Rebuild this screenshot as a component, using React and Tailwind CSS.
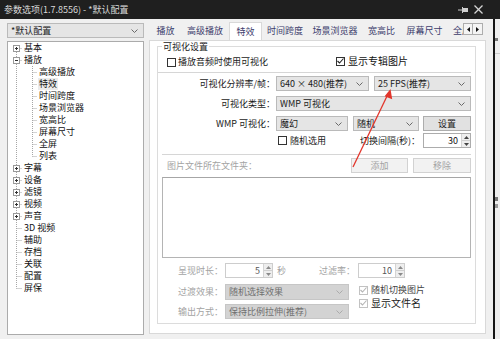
import React from "react";

function Chevron({ color = "#666666" }) {
  return (
    <svg width="7" height="4" viewBox="0 0 7 4" className="shrink-0">
      <polyline points="0.5,0.5 3.5,3.5 6.5,0.5" fill="none" stroke={color} strokeWidth="1" />
    </svg>
  );
}

function Select({ w, text, disabled, h = "h-[15px]" }) {
  return (
    <div
      className={`${w} ${h} shrink-0 flex items-center justify-between pl-[3px] pr-[5px] border ${
        disabled ? "bg-[#d3d3d3] border-[#c6c6c6] text-[#707070]" : "bg-[#e5e5e5] border-[#bababa] text-[#1a1a1a]"
      }`}
    >
      <span className="whitespace-nowrap">{text}</span>
      <Chevron color={disabled ? "#ababab" : "#6a6a6a"} />
    </div>
  );
}

function Spin({ w, value, disabled }) {
  const arrow = disabled ? "#8a8a8a" : "#444444";
  return (
    <div
      className={`${w} h-[15px] shrink-0 flex border bg-white ${
        disabled ? "border-[#cdcdcd] text-[#555555]" : "border-[#acacac] text-[#111111]"
      }`}
    >
      <div className="flex-1 flex items-center justify-end pr-[3px]">{value}</div>
      <div className="w-[9px] flex flex-col border-l border-[#d4d4d4] bg-[#eeeeee]">
        <div className="flex-1 flex items-center justify-center">
          <svg width="5" height="3" viewBox="0 0 5 3">
            <polygon points="2.5,0 5,3 0,3" fill={arrow} />
          </svg>
        </div>
        <div className="h-px bg-[#cfcfcf]" />
        <div className="flex-1 flex items-center justify-center">
          <svg width="5" height="3" viewBox="0 0 5 3">
            <polygon points="0,0 5,0 2.5,3" fill={arrow} />
          </svg>
        </div>
      </div>
    </div>
  );
}

function Check({ checked, disabled }) {
  return (
    <span
      className={`w-[9px] h-[9px] shrink-0 border bg-white flex items-center justify-center ${
        disabled ? "border-[#c2c2c2]" : "border-[#333333]"
      }`}
    >
      {checked && (
        <svg width="7" height="6" viewBox="0 0 7 6">
          <polyline
            points="0.5,3 2.5,5 6.5,0.5"
            fill="none"
            stroke={disabled ? "#b4b4b4" : "#222222"}
            strokeWidth="1.1"
          />
        </svg>
      )}
    </span>
  );
}

const tree = [
  { t: "基本", k: "plus", first: true },
  { t: "播放", k: "minus" },
  { t: "高级播放", c: 1 },
  { t: "特效", c: 1, sel: true },
  { t: "时间跨度", c: 1 },
  { t: "场景浏览器", c: 1 },
  { t: "宽高比", c: 1 },
  { t: "屏幕尺寸", c: 1 },
  { t: "全屏", c: 1 },
  { t: "列表", c: 1, last: true },
  { t: "字幕", k: "plus" },
  { t: "设备", k: "plus" },
  { t: "滤镜", k: "plus" },
  { t: "视频", k: "plus" },
  { t: "声音", k: "plus" },
  { t: "3D 视频" },
  { t: "辅助" },
  { t: "存档" },
  { t: "关联" },
  { t: "配置" },
  { t: "屏保", lastTop: true },
];

function TreeRow({ it }) {
  const w = it.c ? 30 : 15;
  const dot = "#a6a6a6";
  return (
    <div className="h-[12px] flex items-center leading-[12px]">
      <svg width={w} height="12" viewBox={`0 0 ${w} 12`} className="shrink-0">
        <line
          x1="8.5"
          y1={it.first ? 6 : 0}
          x2="8.5"
          y2={it.lastTop ? 6.5 : 12}
          stroke={dot}
          strokeDasharray="1 1"
        />
        {!it.c && <line x1="8.5" y1="6.5" x2="14" y2="6.5" stroke={dot} strokeDasharray="1 1" />}
        {it.c && (
          <>
            <line x1="24.5" y1="0" x2="24.5" y2={it.last ? 6.5 : 12} stroke={dot} strokeDasharray="1 1" />
            <line x1="24.5" y1="6.5" x2="29" y2="6.5" stroke={dot} strokeDasharray="1 1" />
          </>
        )}
        {it.k && (
          <>
            <rect x="5.5" y="3.5" width="6" height="6" fill="white" stroke="#9a9a9a" />
            <line x1="7" y1="6.5" x2="10" y2="6.5" stroke="#333333" />
            {it.k === "plus" && <line x1="8.5" y1="5" x2="8.5" y2="8" stroke="#333333" />}
          </>
        )}
      </svg>
      <span className={`px-[1px] text-[#111111] whitespace-nowrap ${it.sel ? "bg-[#ebebeb]" : ""}`}>{it.t}</span>
    </div>
  );
}

function Tab({ w, children, sel }) {
  if (sel) {
    return (
      <div
        className={`${w} shrink-0 h-[19px] -mb-[1px] pb-[1px] bg-white border-t border-x border-[#d9d9d9] flex items-center justify-center text-[#3c3c6c] whitespace-nowrap`}
      >
        {children}
      </div>
    );
  }
  return (
    <div className={`${w} shrink-0 h-[18px] flex items-center justify-center text-[#3c3c6c] whitespace-nowrap`}>
      {children}
    </div>
  );
}

export default function App() {
  return (
    <div className="w-[500px] h-[339px] flex overflow-hidden relative bg-[#1e1e1e] text-[9px] leading-[12px] font-['Noto_Sans_CJK_SC','Noto_Sans',sans-serif]">
      <div className="w-[493px] flex flex-col">
        {/* title bar */}
        <div className="h-[19px] bg-[#1f1f1f] flex items-center pl-[4px] pr-[10px] text-[#dadada]">
          <span className="flex-1 whitespace-nowrap">参数选项(1.7.8556) - *默认配置</span>
          <svg width="11" height="8" viewBox="0 0 11 8" className="mr-[5px]">
            <line x1="0" y1="4" x2="4" y2="4" stroke="#cfcfcf" strokeWidth="1" />
            <line x1="4.5" y1="1" x2="4.5" y2="7" stroke="#cfcfcf" strokeWidth="1" />
            <rect x="5" y="2" width="5" height="4" fill="#cfcfcf" />
          </svg>
          <svg width="9" height="9" viewBox="0 0 9 9">
            <line x1="0.5" y1="0.5" x2="8.5" y2="8.5" stroke="#d4d4d4" strokeWidth="1.2" />
            <line x1="8.5" y1="0.5" x2="0.5" y2="8.5" stroke="#d4d4d4" strokeWidth="1.2" />
          </svg>
        </div>

        {/* body */}
        <div className="flex-1 bg-[#f0f0f0] flex pl-[7px] pt-[4px]">
          {/* left column */}
          <div className="w-[137px] flex flex-col shrink-0">
            <Select w="w-[137px]" text="*默认配置" />
            <div className="mt-[3px] h-[294px] border border-[#ababab] bg-white">
              {tree.map((it) => (
                <TreeRow key={it.t} it={it} />
              ))}
            </div>
          </div>

          {/* right column */}
          <div className="ml-[5px] w-[337px] -mt-[1px] flex flex-col shrink-0">
            <div className="h-[18px] flex items-end relative z-10">
              <div className="w-[314px] flex items-end overflow-hidden">
                <div className="w-[1px] shrink-0" />
                <Tab w="w-[31px]">播放</Tab>
                <Tab w="w-[48px]">高级播放</Tab>
                <Tab w="w-[33px]" sel>
                  特效
                </Tab>
                <Tab w="w-[46px]">时间跨度</Tab>
                <Tab w="w-[54px]">场景浏览器</Tab>
                <Tab w="w-[39px]">宽高比</Tab>
                <Tab w="w-[47px]">屏幕尺寸</Tab>
                <div className="shrink-0 h-[18px] pl-[5px] flex items-center text-[#3c3c6c] whitespace-nowrap">全屏</div>
              </div>
              <div className="self-start mt-[1px] flex">
                <div className="w-[10px] h-[12px] border border-[#adadad] bg-[#f4f4f4] flex items-center justify-center">
                  <svg width="3" height="5" viewBox="0 0 3 5">
                    <polygon points="3,0 3,5 0,2.5" fill="#111111" />
                  </svg>
                </div>
                <div className="w-[10px] h-[12px] border border-l-0 border-[#adadad] bg-[#f4f4f4] flex items-center justify-center">
                  <svg width="3" height="5" viewBox="0 0 3 5">
                    <polygon points="0,0 0,5 3,2.5" fill="#111111" />
                  </svg>
                </div>
              </div>
            </div>

            {/* tab pane */}
            <div className="h-[294px] border border-[#d9d9d9] bg-white pl-[7px] pr-[9px]">
              <fieldset className="border border-[#dcdcdc] pb-[4px]">
                <legend className="ml-[4px] px-[1px] leading-[11px] text-[#1a1a1a]">可视化设置</legend>
                <div className="flex flex-col text-[#1a1a1a]">
                  {/* checkbox row */}
                  <div className="mt-[4px] h-[12px] flex items-center pl-[9px]">
                    <div className="w-[169px] flex items-center gap-[2px]">
                      <Check />
                      <span className="whitespace-nowrap">播放音频时使用可视化</span>
                    </div>
                    <div className="flex items-center gap-[3px] -mt-[2px]">
                      <Check checked />
                      <span className="whitespace-nowrap text-[10px] text-[#111111]">显示专辑图片</span>
                    </div>
                  </div>
                  <div className="mt-[4px] h-px bg-[#d6d6d6] mr-[4px]" />

                  {/* row 1 */}
                  <div className="mt-[3px] w-[313px] h-[15px] flex items-center">
                    <span className="w-[117px] text-right whitespace-nowrap">可视化分辨率/帧：</span>
                    <div className="ml-[1px] flex">
                      <Select w="w-[93px]" text="640 × 480(推荐)" />
                      <div className="ml-[5px]">
                        <Select w="w-[97px]" text="25 FPS(推荐)" />
                      </div>
                    </div>
                  </div>
                  {/* row 2 */}
                  <div className="mt-[5px] w-[313px] h-[15px] flex items-center">
                    <span className="w-[117px] text-right whitespace-nowrap">可视化类型：</span>
                    <div className="ml-[1px]">
                      <Select w="w-[195px]" text="WMP 可视化" />
                    </div>
                  </div>
                  {/* row 3 */}
                  <div className="mt-[5px] w-[313px] h-[15px] flex items-center">
                    <span className="w-[117px] text-right whitespace-nowrap">WMP 可视化：</span>
                    <div className="ml-[1px] flex items-center">
                      <Select w="w-[72px]" text="魔幻" />
                      <div className="ml-[5px]">
                        <Select w="w-[66px]" text="随机" />
                      </div>
                      <div className="ml-[4px] w-[48px] h-[15px] border border-[#adadad] bg-[#e1e1e1] flex items-center justify-center">
                        设置
                      </div>
                    </div>
                  </div>
                  {/* row 4 */}
                  <div className="mt-[2px] w-[313px] h-[15px] flex items-center">
                    <div className="ml-[120px] flex items-center gap-[3px]">
                      <Check />
                      <span className="whitespace-nowrap">随机选用</span>
                    </div>
                    <div className="flex-1" />
                    <span className="whitespace-nowrap">切换间隔(秒)：</span>
                    <div className="ml-[3px]">
                      <Spin w="w-[48px]" value="30" />
                    </div>
                  </div>
                  <div className="mt-[6px] h-px bg-[#d6d6d6] ml-[4px] mr-[4px]" />

                  {/* folder row */}
                  <div className="mt-[3px] w-[313px] h-[15px] flex items-center">
                    <span className="ml-[9px] whitespace-nowrap text-[#a3a3a3]">图片文件所在文件夹：</span>
                    <div className="flex-1" />
                    <div className="w-[57px] h-[15px] border border-[#d2d2d2] bg-[#f2f2f2] flex items-center justify-center text-[#a3a3a3]">
                      添加
                    </div>
                    <div className="ml-[5px] w-[58px] h-[15px] border border-[#d2d2d2] bg-[#f2f2f2] flex items-center justify-center text-[#a3a3a3]">
                      移除
                    </div>
                  </div>
                  {/* list */}
                  <div className="mt-[4px] ml-[4px] w-[309px] h-[81px] border border-[#b4b4b4] border-t-[#a6a6a6] bg-white" />

                  {/* spin row */}
                  <div className="mt-[5px] h-[15px] flex items-center text-[#a3a3a3]">
                    <span className="w-[65px] text-right whitespace-nowrap">呈现时长：</span>
                    <div className="ml-[2px]">
                      <Spin w="w-[48px]" value="5" disabled />
                    </div>
                    <span className="ml-[4px]">秒</span>
                    <span className="ml-[33px] whitespace-nowrap">过滤率：</span>
                    <div className="ml-[3px]">
                      <Spin w="w-[47px]" value="10" disabled />
                    </div>
                  </div>

                  {/* bottom rows */}
                  <div className="mt-[6px] flex">
                    <div className="w-[191px] flex flex-col">
                      <div className="h-[16px] flex items-center">
                        <span className="w-[65px] text-right whitespace-nowrap text-[#a3a3a3]">过渡效果：</span>
                        <div className="ml-[2px]">
                          <Select w="w-[124px]" h="h-[16px]" text="随机选择效果" disabled />
                        </div>
                      </div>
                      <div className="mt-[4px] h-[15px] flex items-center">
                        <span className="w-[65px] text-right whitespace-nowrap text-[#a3a3a3]">输出方式：</span>
                        <div className="ml-[2px]">
                          <Select w="w-[124px]" text="保持比例拉伸(推荐)" disabled />
                        </div>
                      </div>
                    </div>
                    <div className="ml-[10px] flex flex-col">
                      <div className="h-[12px] flex items-center gap-[3px]">
                        <Check checked disabled />
                        <span className="whitespace-nowrap text-[#444444]">随机切换图片</span>
                      </div>
                      <div className="mt-[1px] h-[12px] flex items-center gap-[3px]">
                        <Check checked disabled />
                        <span className="whitespace-nowrap text-[10px] text-[#222222]">显示文件名</span>
                      </div>
                    </div>
                  </div>
                </div>
              </fieldset>
            </div>
          </div>
        </div>
      </div>

      {/* right strip (neighbouring window) */}
      <div className="w-[7px] flex flex-col">
        <div className="h-[19px] bg-[#1f1f1f]" />
        <div className="flex-1 border-l-2 border-[#151515] bg-[#eeeeee] flex flex-col">
          <div className="mt-[19px] h-[3px] w-[3px] bg-[#777777]" />
          <div className="mt-[12px] h-px bg-[#cccccc]" />
          <div className="mt-[143px] h-[4px] w-[3px] bg-[#777777]" />
          <div className="mt-[3px] h-[4px] w-[3px] bg-[#999999]" />
        </div>
      </div>

      {/* red annotation arrow */}
      <svg className="absolute left-0 top-0 pointer-events-none" width="500" height="339" viewBox="0 0 500 339">
        <line x1="353" y1="167" x2="388.5" y2="93" stroke="#e2362c" strokeWidth="1.3" />
        <polygon points="390.5,89 392.2,99.2 384.6,96.2" fill="#e2362c" />
      </svg>
    </div>
  );
}
